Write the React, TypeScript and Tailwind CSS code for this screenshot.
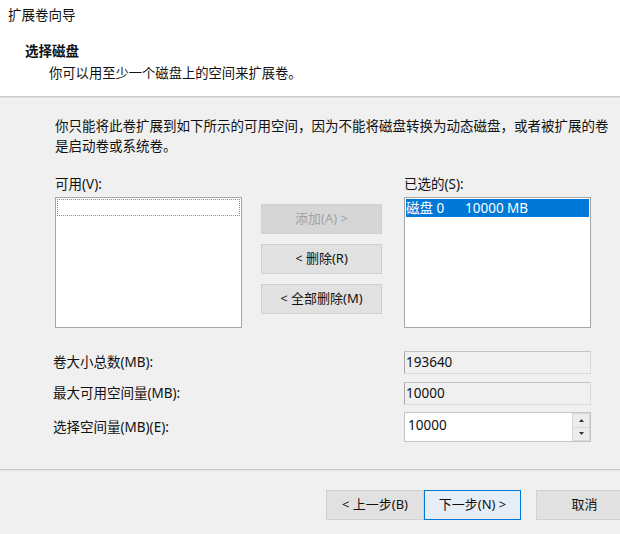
import React from "react";

const font = { fontFamily: '"Noto Sans", "Noto Sans CJK SC", sans-serif' };

function Btn({ children, w, className = "" }: { children: React.ReactNode; w: string; className?: string }) {
  return (
    <div className={`${w} h-[30px] shrink-0 flex items-center justify-center text-[13px] ${className}`}>{children}</div>
  );
}

export default function App() {
  return (
    <div className="w-[620px] h-[534px] overflow-hidden bg-[#f0f0f0] text-[#111] flex flex-col" style={font}>
      {/* header */}
      <div className="h-[96px] bg-white shrink-0">
        <div className="pl-[8px] pt-[6px] text-[13.5px] leading-[18px]">扩展卷向导</div>
        <div className="pl-[25px] mt-[18px] text-[13.5px] leading-[18px] font-bold">选择磁盘</div>
        <div className="pl-[49px] mt-[4px] text-[13.3px] leading-[18px]">你可以用至少一个磁盘上的空间来扩展卷。</div>
      </div>
      <div className="h-px bg-[#c9c9c9] shrink-0" />
      <div className="h-px bg-[#e2e2e2] shrink-0" />

      {/* body */}
      <div className="pl-[55px] pt-[18px] text-[13.5px]">
        <p className="leading-[20px]">
          你只能将此卷扩展到如下所示的可用空间，因为不能将磁盘转换为动态磁盘，或者被扩展的卷
          <br />
          是启动卷或系统卷。
        </p>

        <div className="flex mt-[20px]">
          <div className="w-[187px]">
            <div className="leading-[16px]">可用(V):</div>
            <div className="mt-[5px] h-[131px] bg-white border border-[#a6a6a6] p-px">
              <div className="h-[17px] border border-dotted border-[#8a8a8a]" />
            </div>
          </div>
          <div className="ml-[19px] w-[121px] pt-[28px] flex flex-col gap-[10px]">
            <Btn w="w-[121px]" className="bg-[#d6d6d6] text-[#a3a3a3] border border-[#d0d0d0]">添加(A) &gt;</Btn>
            <Btn w="w-[121px]" className="bg-[#e1e1e1] border border-[#cfcfcf]">&lt; 删除(R)</Btn>
            <Btn w="w-[121px]" className="bg-[#e1e1e1] border border-[#cfcfcf]">&lt; 全部删除(M)</Btn>
          </div>
          <div className="ml-[22px] w-[187px]">
            <div className="leading-[16px]">已选的(S):</div>
            <div className="mt-[5px] h-[131px] bg-white border border-[#a6a6a6] p-px">
              <div className="h-[18px] bg-[#0078d7] text-white flex items-center leading-[18px]">
                <span className="w-[59px] shrink-0">磁盘 0</span>
                <span>10000 MB</span>
              </div>
            </div>
          </div>
        </div>

        <div className="-ml-[2px] mt-[23px] flex flex-col gap-[8px]">
          <div className="flex items-center">
            <div className="w-[351px]">卷大小总数(MB):</div>
            <div className="w-[187px] h-[23px] border border-[#dadada] border-l-[#a8a8a8] border-t-[#c4c4c4] flex items-center pl-[1px]">193640</div>
          </div>
          <div className="flex items-center">
            <div className="w-[351px]">最大可用空间量(MB):</div>
            <div className="w-[187px] h-[23px] border border-[#dadada] border-l-[#a8a8a8] border-t-[#c4c4c4] flex items-center pl-[1px]">10000</div>
          </div>
          <div className="flex items-center -mt-px">
            <div className="w-[351px]">选择空间量(MB)(E):</div>
            <div className="w-[187px] h-[30px] border border-[#c4c4c4] bg-white flex">
              <div className="flex-1 pl-[3px] pt-[3px] leading-[18px]">10000</div>
              <div className="w-[18px] flex flex-col gap-px p-px bg-[#d8d8d8]">
                <div className="flex-1 bg-[#ececec] flex items-center justify-center">
                  <svg width="5" height="3" viewBox="0 0 5 3"><path d="M0 3L2.5 0L5 3Z" fill="#333" /></svg>
                </div>
                <div className="flex-1 bg-[#ececec] flex items-center justify-center">
                  <svg width="5" height="3" viewBox="0 0 5 3"><path d="M0 0L2.5 3L5 0Z" fill="#333" /></svg>
                </div>
              </div>
            </div>
          </div>
        </div>
      </div>

      {/* footer */}
      <div className="mt-[27px] h-px bg-[#c9c9c9] shrink-0" />
      <div className="h-px bg-[#e2e2e2] shrink-0" />
      <div className="flex pl-[326px] mt-[19px]">
        <Btn w="w-[98px]" className="bg-[#e1e1e1] border border-[#d0d0d0]">&lt; 上一步(B)</Btn>
        <Btn w="w-[97px]" className="bg-[#e5eef7] border border-[#0078d7]">下一步(N) &gt;</Btn>
        <Btn w="w-[97px]" className="ml-[15px] bg-[#e1e1e1] border border-[#d0d0d0]">取消</Btn>
      </div>
    </div>
  );
}
